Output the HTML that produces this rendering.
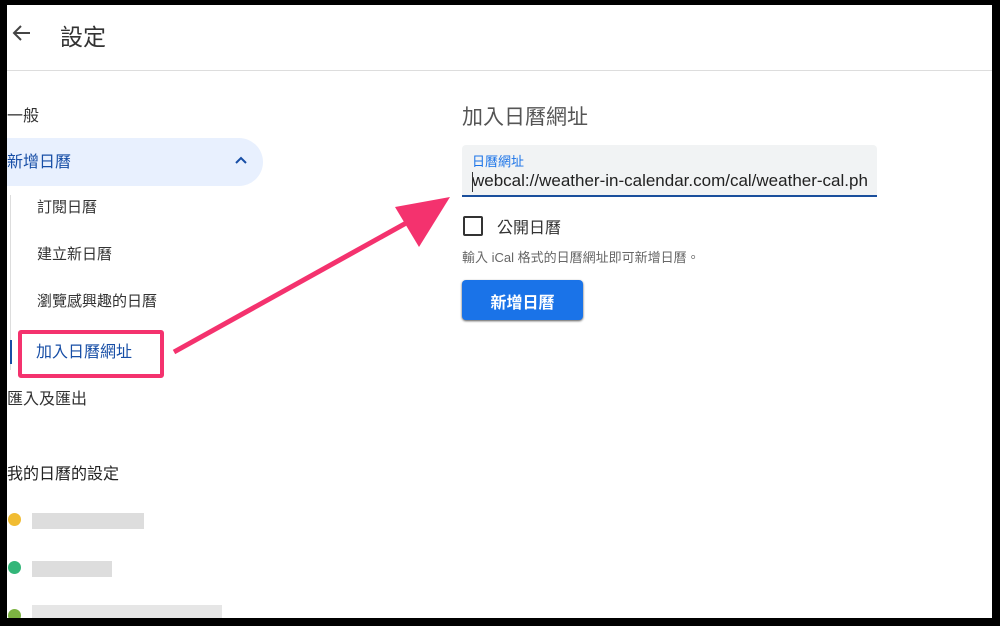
<!DOCTYPE html>
<html><head><meta charset="utf-8"><style>
body{margin:0;width:1000px;height:626px;background:#000;position:relative;overflow:hidden;font-family:"Liberation Sans","Noto Sans CJK TC",sans-serif;}
.page{position:absolute;left:7px;top:5px;width:985px;height:613px;background:#fff;overflow:hidden;}
.t{position:absolute;white-space:nowrap;}
</style></head><body>
<div class="page">
<svg style="position:absolute;left:3px;top:16px" width="24" height="24" viewBox="0 0 24 24"><path d="M20 12H5M11 5l-7 7 7 7" stroke="#444" stroke-width="2" fill="none"/></svg>
<div class="t" style="left:53px;top:13px;font-size:23px;color:#333">設定</div>
<div style="position:absolute;left:0;top:65px;width:985px;height:1px;background:#ddd"></div>
<div class="t" style="left:0;top:97px;font-size:16px;color:#333">一般</div>
<div style="position:absolute;left:-20px;top:133px;width:276px;height:48px;border-radius:0 24px 24px 0;background:#e8f0fe"></div>
<div class="t" style="left:0;top:143px;font-size:16px;color:#174ea6">新增日曆</div>
<svg style="position:absolute;left:226px;top:149px" width="16" height="12" viewBox="0 0 16 12"><path d="M3 9l5-5 5 5" stroke="#174ea6" stroke-width="2" fill="none"/></svg>
<div style="position:absolute;left:3px;top:190px;width:1px;height:175px;background:#ddd"></div>
<div style="position:absolute;left:3px;top:335px;width:2px;height:24px;background:#174ea6"></div>
<div class="t" style="left:30px;top:191px;font-size:15px;color:#333">訂閱日曆</div>
<div class="t" style="left:30px;top:238px;font-size:15px;color:#333">建立新日曆</div>
<div class="t" style="left:30px;top:285px;font-size:15px;color:#333">瀏覽感興趣的日曆</div>
<div class="t" style="left:29px;top:333px;font-size:16px;color:#174ea6">加入日曆網址</div>
<div style="position:absolute;left:11px;top:325px;width:138px;height:40px;border:4px solid #f4326e;border-radius:3px"></div>
<div class="t" style="left:0;top:380px;font-size:16px;color:#333">匯入及匯出</div>
<div class="t" style="left:0;top:455px;font-size:16px;color:#222">我的日曆的設定</div>
<div style="position:absolute;left:1px;top:508px;width:13px;height:13px;border-radius:50%;background:#f1bc32"></div>
<div style="position:absolute;left:25px;top:508px;width:112px;height:16px;background:#ddd"></div>
<div style="position:absolute;left:1px;top:556px;width:13px;height:13px;border-radius:50%;background:#33b679"></div>
<div style="position:absolute;left:25px;top:556px;width:80px;height:16px;background:#ddd"></div>
<div style="position:absolute;left:1px;top:604px;width:13px;height:13px;border-radius:50%;background:#7cb342"></div>
<div style="position:absolute;left:25px;top:600px;width:190px;height:13px;background:#e6e6e6"></div>
<div class="t" style="left:455px;top:96px;font-size:21px;color:#555">加入日曆網址</div>
<div style="position:absolute;left:455px;top:140px;width:415px;height:50px;background:#f1f3f4;border-radius:4px 4px 0 0;border-bottom:2px solid #1a4f9c"></div>
<div class="t" style="left:465px;top:146px;font-size:13px;color:#1a73e8">日曆網址</div>
<div class="t" style="left:465px;top:166px;width:396px;overflow:hidden;font-size:17px;color:#222">webcal://weather-in-calendar.com/cal/weather-cal.php</div>
<div style="position:absolute;left:465px;top:167px;width:1px;height:20px;background:#333"></div>
<div style="position:absolute;left:456px;top:211px;width:16px;height:16px;border:2px solid #333;border-radius:2px"></div>
<div class="t" style="left:490px;top:209px;font-size:16px;color:#333">公開日曆</div>
<div class="t" style="left:455px;top:242px;font-size:13px;color:#666">輸入 iCal 格式的日曆網址即可新增日曆。</div>
<div style="position:absolute;left:455px;top:275px;width:121px;height:40px;background:#1a73e8;border-radius:4px;box-shadow:0 1px 2px #555"></div>
<div class="t" style="left:455px;top:284px;width:121px;text-align:center;font-size:16px;font-weight:bold;color:#fff">新增日曆</div>
<svg style="position:absolute;left:0;top:0" width="985" height="613"><line x1="167" y1="347" x2="410" y2="212" stroke="#f4326e" stroke-width="5"/><polygon points="443,192 388,202 412,242" fill="#f4326e"/></svg>
</div>
</body></html>
